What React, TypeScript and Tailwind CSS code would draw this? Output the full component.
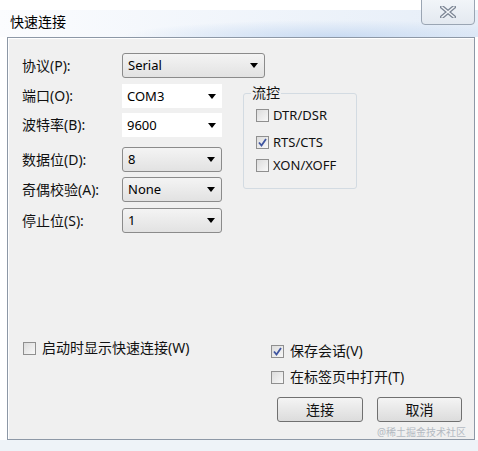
import React from 'react';

const font = { fontFamily: '"Noto Sans", "Noto Sans CJK SC", sans-serif' };

function Arrow() {
  return (
    <svg width="8" height="5" viewBox="0 0 8 5" className="shrink-0">
      <path d="M0 0 L8 0 L4 5 Z" fill="#000" />
    </svg>
  );
}

function Select({ value, width, white }: { value: string; width: string; white?: boolean }) {
  return (
    <div
      className={
        white
          ? `${width} h-[24px] flex items-center justify-between pl-[5px] pr-[6px] bg-white`
          : `${width} h-[25px] flex items-center justify-between pl-[5px] pr-[6px] rounded-[3px] border border-[#8b8b8b] bg-gradient-to-b from-[#f4f4f4] to-[#e2e2e2]`
      }
    >
      <span className="text-[13px] leading-none text-black">{value}</span>
      <Arrow />
    </div>
  );
}

function Check({ checked }: { checked?: boolean }) {
  return (
    <div className="w-[13px] h-[13px] shrink-0 border border-[#8f8f8f] bg-gradient-to-br from-[#dcdcdc] to-[#f8f8f8] flex items-center justify-center">
      {checked && (
        <svg width="9" height="9" viewBox="0 0 9 9">
          <path d="M1 4.5 L3.5 7.5 L8 1" fill="none" stroke="#3f55a0" strokeWidth="1.8" />
        </svg>
      )}
    </div>
  );
}

function Row({ label, children, mt }: { label: string; children: React.ReactNode; mt: string }) {
  return (
    <div className={`flex items-center ${mt}`}>
      <span className="w-[100px] text-[14px] leading-none text-[#111]">{label}</span>
      {children}
    </div>
  );
}

function CheckItem({ label, checked, mt }: { label: string; checked?: boolean; mt: string }) {
  return (
    <div className={`flex items-center gap-[4px] ${mt}`}>
      <Check checked={checked} />
      <span className="text-[13px] leading-none text-[#111]">{label}</span>
    </div>
  );
}

export default function App() {
  return (
    <div className="w-[478px] h-[451px] bg-white overflow-hidden relative" style={font}>
      {/* glass title strip */}
      <div className="mt-[10px] h-[27px] relative bg-[radial-gradient(ellipse_at_70%_100%,#c9dbf2_0%,transparent_45%),linear-gradient(to_right,#fbfcfe,#e6eef8)]">
        <span className="absolute left-[10px] top-[3px] text-[14px] leading-[18px] text-black">快速连接</span>
      </div>
      <div className="absolute left-[421px] top-[-2px] w-[54px] h-[27px] rounded-b-[4px] border border-[#9aa5b3] bg-gradient-to-b from-[#f2f5f9] to-[#e3e9f0] flex items-center justify-center">
        <svg width="16" height="12" viewBox="0 0 16 12">
          <path d="M2 1 L14 11 M14 1 L2 11" stroke="#7b8594" strokeWidth="4" strokeLinecap="round" />
          <path d="M2 1 L14 11 M14 1 L2 11" stroke="#f0f3f7" strokeWidth="1.6" strokeLinecap="round" />
        </svg>
      </div>

      {/* dialog body */}
      <div className="ml-[7px] w-[468px] h-[403px] border border-[#8d98a6] bg-[#f0f0f0] shadow-[inset_1px_1px_0_#ffffff] relative">
        <div className="pl-[14px]">
          <Row label="协议(P):" mt="mt-[15px]">
            <Select value="Serial" width="w-[143px]" />
          </Row>

          <div className="flex items-start mt-[6px]">
            <div className="flex flex-col">
              <Row label="端口(O):" mt="mt-0">
                <Select value="COM3" width="w-[100px]" white />
              </Row>
              <Row label="波特率(B):" mt="mt-[5px]">
                <Select value="9600" width="w-[100px]" white />
              </Row>
              <Row label="数据位(D):" mt="mt-[10px]">
                <Select value="8" width="w-[100px]" />
              </Row>
              <Row label="奇偶校验(A):" mt="mt-[5px]">
                <Select value="None" width="w-[100px]" />
              </Row>
              <Row label="停止位(S):" mt="mt-[6px]">
                <Select value="1" width="w-[100px]" />
              </Row>
            </div>

            <div className="ml-[21px] mt-[9px] w-[114px] h-[96px] rounded-[3px] border border-[#d3dbe2] relative">
              <span className="absolute left-[7px] top-[-9px] px-[1px] bg-[#f0f0f0] text-[14px] leading-[16px] text-[#111]">流控</span>
              <div className="pl-[12px] pt-[15px] flex flex-col">
                <CheckItem label="DTR/DSR" mt="mt-0" />
                <CheckItem label="RTS/CTS" checked mt="mt-[14px]" />
                <CheckItem label="XON/XOFF" mt="mt-[10px]" />
              </div>
            </div>
          </div>
        </div>

        <div className="flex items-start mt-[108px] pl-[15px]">
          <div className="w-[248px] flex items-center gap-[6px]">
            <Check />
            <span className="text-[14px] leading-none text-[#111]">启动时显示快速连接(W)</span>
          </div>
          <div className="flex flex-col mt-[3px]">
            <div className="flex items-center gap-[6px]">
              <Check checked />
              <span className="text-[14px] leading-none text-[#111]">保存会话(V)</span>
            </div>
            <div className="flex items-center gap-[6px] mt-[12px]">
              <Check />
              <span className="text-[14px] leading-none text-[#111]">在标签页中打开(T)</span>
            </div>
            <div className="flex gap-[14px] ml-[6px] mt-[13px]">
              <button className="w-[86px] h-[25px] rounded-[3px] border border-[#707070] bg-gradient-to-b from-[#f4f4f4] to-[#dcdcdc] text-[14px] leading-none text-[#111]">连接</button>
              <button className="w-[85px] h-[25px] rounded-[3px] border border-[#707070] bg-gradient-to-b from-[#f4f4f4] to-[#dcdcdc] text-[14px] leading-none text-[#111]">取消</button>
            </div>
          </div>
        </div>

        <span className="absolute left-[369px] top-[389px] text-[10px] leading-none text-[#b4bac2]">@稀土掘金技术社区</span>
      </div>
      <div className="h-[11px] bg-[#eef3f8]" />
    </div>
  );
}
